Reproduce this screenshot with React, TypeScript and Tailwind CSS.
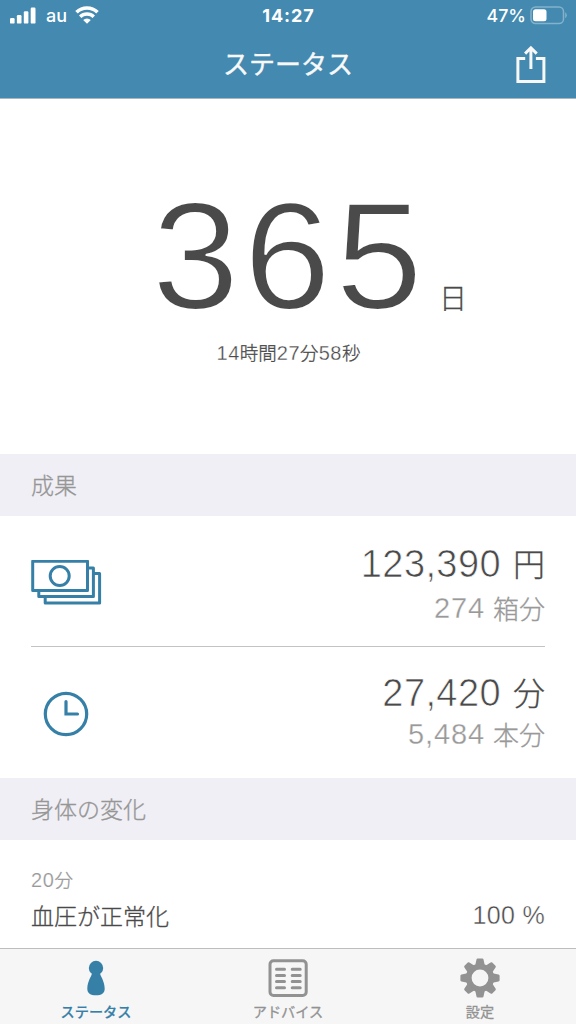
import type { ReactNode } from "react";

const JP = "font-['Noto_Sans_CJK_JP',sans-serif]";
const THIN = "font-light [-webkit-text-stroke:0.3px]";
const NUM = "font-['Liberation_Sans','Noto_Sans_CJK_JP',sans-serif]";

function StatusBar() {
  return (
    <div className="flex h-8 items-center justify-between pr-[9px] pl-[10px] text-white">
      <div className="flex w-[180px] items-center">
        <svg className="-mt-[2px]" width="26" height="17" viewBox="0 0 26 17" fill="currentColor">
          <rect x="0" y="11" width="4.6" height="5.6" rx="1.2" />
          <rect x="6.9" y="8" width="4.6" height="8.6" rx="1.2" />
          <rect x="13.8" y="4.3" width="4.6" height="12.3" rx="1.2" />
          <rect x="20.7" y="0.5" width="4.8" height="16.1" rx="1.2" />
        </svg>
        <span className="ml-[10px] w-[22px] font-['Inter',sans-serif] text-[18px] leading-8 font-medium">au</span>
        <svg className="-mt-[2px] ml-[7px]" width="24" height="18" viewBox="0 0 24 18" fill="none" stroke="currentColor">
          <path d="M1.5 6.3a15 15 0 0 1 21 0" strokeWidth="3.6" />
          <path d="M5.2 10.8a9.7 9.7 0 0 1 13.6 0" strokeWidth="3.4" />
          <path d="M8.2 14a5.4 5.4 0 0 1 7.6 0L12 17.8z" fill="currentColor" stroke="none" />
        </svg>
      </div>
      <div className="font-['Inter',sans-serif] text-[18px] leading-8 font-bold tracking-[0.9px]">14:27</div>
      <div className="flex w-[180px] items-center justify-end">
        <span className="font-['Inter',sans-serif] text-[17.8px] leading-8 font-medium">47%</span>
        <svg className="-mt-[2px] ml-[4px] shrink-0" width="37" height="19" viewBox="0 0 37 19">
          <rect x="1" y="1" width="32.5" height="16.5" rx="4.5" fill="none" stroke="#83b2cc" strokeWidth="1.5" />
          <rect x="3" y="3.2" width="13.5" height="12" rx="2.5" fill="#fff" />
          <path d="M35.2 6.3q1.6 1 1.6 3t-1.6 3z" fill="#83b2cc" />
        </svg>
      </div>
    </div>
  );
}

function SectionTitle({ children }: { children: ReactNode }) {
  return (
    <h2 className={`${JP} ${THIN} flex h-[62px] items-center bg-[#f0eff5] pb-[2px] pl-[31px] text-[23px] text-[#969696]`}>
      {children}
    </h2>
  );
}

function Tab({ icon, label, active = false }: { icon: ReactNode; label: string; active?: boolean }) {
  return (
    <div className={`flex w-48 flex-col items-center ${active ? "text-[#3680a8]" : "text-[#929292]"}`}>
      <div className="flex h-[53px] items-center justify-center pt-[5px]">{icon}</div>
      <span className={`${JP} text-[14.2px] leading-[18px] ${active ? "font-medium [-webkit-text-stroke:0.2px]" : "font-normal [-webkit-text-stroke:0.3px]"}`}>{label}</span>
    </div>
  );
}

function Amount({ value, unit, sub, subUnit, tight = false }: { value: string; unit: string; sub: string; subUnit: string; tight?: boolean }) {
  return (
    <div className={`flex flex-col items-end ${tight ? "pb-[2px]" : "pt-[7px]"}`}>
      <div className={`flex gap-[12px] text-[#4a4a4a] ${tight ? "h-[44px]" : "h-[47px]"}`}>
        <span className={`${NUM} text-[38px] leading-[44px] tracking-[0.4px] [-webkit-text-stroke:0.7px_white]`}>{value}</span>
        <span className={`${JP} ${THIN} text-[32px] leading-[40px]`}>{unit}</span>
      </div>
      <div className="flex h-[38px] gap-[8px] text-[#999]">
        <span className={`${NUM} text-[29px] leading-[39px] tracking-[0.9px] [-webkit-text-stroke:0.3px_white]`}>{sub}</span>
        <span className={`${JP} ${THIN} text-[26px] leading-[37px]`}>{subUnit}</span>
      </div>
    </div>
  );
}

export default function App() {
  return (
    <div className="flex h-[1024px] w-[576px] flex-col overflow-hidden bg-white">
      <header className="h-[99px] shrink-0 border-b border-[#a9b5c0] bg-[#4389b0]">
        <StatusBar />
        <div className="flex h-[66px] items-center justify-between px-[30px] text-[#f8f8f8]">
          <span className="w-[30px]" />
          <h1 className={`${JP} pb-[4px] text-[26px] leading-[62px] font-normal [-webkit-text-stroke:0.4px]`}>ステータス</h1>
          <svg width="30" height="40" viewBox="0 0 30 40" fill="none" stroke="currentColor" strokeWidth="3">
            <path d="M9.2 13.6H1.9V36.5H27.9V13.6H19.9" />
            <path d="M14.9 24V3.5M9.1 8.6L14.9 2.8l5.8 5.8" />
          </svg>
        </div>
      </header>
      <section className="h-[355px] shrink-0 text-[#4a4a4a]">
        <div className="flex h-[236px] items-end pl-[152px]">
          <span className={`${NUM} w-[287px] origin-left scale-x-[1.03] text-[152px] leading-[157px] tracking-[4.5px] [-webkit-text-stroke:2px_white]`}>365</span>
          <span className={`${JP} ${THIN} mb-[20px] text-[28px] leading-[36px]`}>日</span>
        </div>
        <div className={`${JP} ${THIN} pt-px pl-px text-center text-[18.5px] leading-[32px]`}>
          <span className={`${NUM} text-[20px] tracking-[0.5px] [-webkit-text-stroke:0.3px_white]`}>14</span>時間
          <span className={`${NUM} text-[20px] tracking-[0.5px] [-webkit-text-stroke:0.3px_white]`}>27</span>分
          <span className={`${NUM} text-[20px] tracking-[0.5px] [-webkit-text-stroke:0.3px_white]`}>58</span>秒
        </div>
      </section>
      <SectionTitle>成果</SectionTitle>
      <section className="h-[262px] shrink-0 px-[31px]">
        <div className="flex h-[131px] items-center justify-between border-b border-[#c3c3c3]">
          <svg className="mt-[3px]" width="71" height="46" viewBox="0 0 71 46" fill="none" stroke="#3680a8" strokeWidth="3" strokeLinejoin="round">
            <rect x="1.7" y="1.2" width="54.8" height="29.2" />
            <circle cx="28.7" cy="16" r="9.5" />
            <path d="M56.5 7.9H62.4V36.6H7.8V30.5M62.4 13.5H68.6V43.1H14.2V36.6" />
          </svg>
          <Amount value="123,390" unit="円" sub="274" subUnit="箱分" />
        </div>
        <div className="flex h-[131px] items-center justify-between">
          <svg className="mt-[2px] ml-[12px]" width="46" height="46" viewBox="0 0 46 46" fill="none" stroke="#3680a8" strokeWidth="3.2" strokeLinecap="round">
            <circle cx="23" cy="23" r="20.7" />
            <path d="M23 10.5V23H34.5" />
          </svg>
          <Amount tight value="27,420" unit="分" sub="5,484" subUnit="本分" />
        </div>
      </section>
      <SectionTitle>身体の変化</SectionTitle>
      <section className="h-[108px] shrink-0 px-[31px] pt-[25px]">
        <div className={`${JP} ${THIN} text-[18.5px] leading-[28px] text-[#999]`}>
          <span className={`${NUM} text-[20px] tracking-[0.6px] [-webkit-text-stroke:0.2px_white]`}>20</span>分
        </div>
        <div className="flex h-[42px] items-center justify-between text-[#4a4a4a]">
          <span className={`${JP} ${THIN} text-[23px]`}>血圧が正常化</span>
          <span className={`${NUM} pt-[2px] text-[25px] tracking-[0.3px] [-webkit-text-stroke:0.4px_white]`}>100 %</span>
        </div>
      </section>
      <nav className="flex h-[76px] shrink-0 border-t border-[#bdbdbd] bg-[#f6f6f6]">
        <Tab
          active
          label="ステータス"
          icon={
            <svg width="18" height="36" viewBox="0 0 18 36" fill="currentColor">
              <circle cx="9" cy="8" r="7.2" />
              <path d="M5 13h8c.2 3 4.7 8 4.7 15.7 0 4.4-3.2 6.6-8.7 6.6S.3 33.1.3 28.7C.3 21 4.8 16 5 13z" />
            </svg>
          }
        />
        <Tab
          label="アドバイス"
          icon={
            <svg width="40" height="38" viewBox="0 0 40 38" fill="none" stroke="currentColor" strokeWidth="3">
              <rect x="2" y="1.7" width="36.2" height="34.8" rx="3.5" />
              <path strokeLinecap="round" d="M8.5 10.2h8M8.5 16.4h8M8.5 22.6h8M8.5 28.8h8M24.2 10.2h8M24.2 16.4h8M24.2 22.6h8M24.2 28.8h8" />
            </svg>
          }
        />
        <Tab
          label="設定"
          icon={
            <svg width="40" height="40" viewBox="-20 -20 40 40" fill="currentColor">
              <circle r="11.3" fill="none" stroke="currentColor" strokeWidth="5.8" />
              {[0, 45, 90, 135, 180, 225, 270, 315].map((a) => (
                <path key={a} transform={`rotate(${a})`} d="M-4.8-12.5L-3.5-18.5Q-3.3-19.6-2.3-19.6H2.3Q3.3-19.6 3.5-18.5L4.8-12.5z" />
              ))}
            </svg>
          }
        />
      </nav>
    </div>
  );
}
